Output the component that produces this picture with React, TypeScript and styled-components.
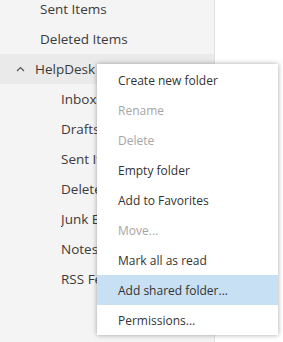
import React from 'react';
import styled, { createGlobalStyle } from 'styled-components';

const GlobalStyle = createGlobalStyle`
  html, body {
    margin: 0;
    padding: 0;
    background: #ffffff;
    overflow: hidden;
  }
  body {
    font-family: "Open Sans", "Noto Sans", sans-serif;
    color: #333333;
  }
`;

type Folder = { label: string; depth: number; expandable?: boolean; hovered?: boolean };

const folders: Folder[] = [
  { label: 'Sent Items', depth: 1 },
  { label: 'Deleted Items', depth: 1 },
  { label: 'HelpDesk Team HelpDesk Team', depth: 0, expandable: true, hovered: true },
  { label: 'Inbox', depth: 2 },
  { label: 'Drafts', depth: 2 },
  { label: 'Sent Items', depth: 2 },
  { label: 'Deleted Items', depth: 2 },
  { label: 'Junk Email', depth: 2 },
  { label: 'Notes', depth: 2 },
  { label: 'RSS Feeds', depth: 2 },
];

type MenuEntry = { label: string; disabled?: boolean; active?: boolean };

const menuItems: MenuEntry[] = [
  { label: 'Create new folder' },
  { label: 'Rename', disabled: true },
  { label: 'Delete', disabled: true },
  { label: 'Empty folder' },
  { label: 'Add to Favorites' },
  { label: 'Move...', disabled: true },
  { label: 'Mark all as read' },
  { label: 'Add shared folder...', active: true },
  { label: 'Permissions...' },
];

const indents = [16, 40, 61];

const App: React.FC = () => {
  return (
    <>
      <GlobalStyle />
      <Page>
        <FolderPane>
          <FolderList>
            {folders.map((f, i) => (
              <FolderRow key={i} $hovered={f.hovered} $indent={indents[f.depth]}>
                {f.expandable && (
                  <Chevron width="9" height="6" viewBox="0 0 9 6">
                    <path d="M1 5 L4.5 1.5 L8 5" fill="none" stroke="#555" strokeWidth="1.2" />
                  </Chevron>
                )}
                <FolderLabel>{f.label}</FolderLabel>
              </FolderRow>
            ))}
          </FolderList>
        </FolderPane>
        <ContextMenu>
          {menuItems.map((m) => (
            <MenuItem key={m.label} $disabled={m.disabled} $active={m.active}>
              {m.label}
            </MenuItem>
          ))}
        </ContextMenu>
      </Page>
    </>
  );
};

export default App;

const Page = styled.div`
  position: relative;
  display: flex;
  width: 283px;
  height: 342px;
  background: #ffffff;
`;

const FolderPane = styled.div`
  width: 214px;
  height: 100%;
  background: #f4f4f4;
  border-right: 1px solid #e1e1e1;
  overflow: hidden;
`;

const FolderList = styled.div`
  display: flex;
  flex-direction: column;
  margin-top: -6px;
`;

const FolderRow = styled.div<{ $hovered?: boolean; $indent: number }>`
  display: flex;
  align-items: center;
  height: 30px;
  padding-left: ${(p) => p.$indent}px;
  padding-right: 2px;
  background: ${(p) => (p.$hovered ? '#eaeaea' : 'transparent')};
  white-space: nowrap;
  overflow: hidden;
`;

const Chevron = styled.svg`
  flex: none;
  margin-right: 10px;
  margin-top: -1px;
`;

const FolderLabel = styled.span`
  font-size: 13.5px;
  color: #3b3b3b;
  overflow: hidden;
`;

const ContextMenu = styled.div`
  position: absolute;
  left: 97px;
  top: 64px;
  width: 181px;
  padding: 1px 0 0;
  display: flex;
  flex-direction: column;
  background: #ffffff;
  box-shadow: 0 0 5px 0 rgba(0, 0, 0, 0.35);
`;

const MenuItem = styled.div<{ $disabled?: boolean; $active?: boolean }>`
  display: flex;
  align-items: center;
  height: 30px;
  padding-left: 21px;
  font-size: 12px;
  white-space: nowrap;
  color: ${(p) => (p.$disabled ? '#a6a6a6' : '#333333')};
  background: ${(p) => (p.$active ? '#c7e0f4' : 'transparent')};
`;
